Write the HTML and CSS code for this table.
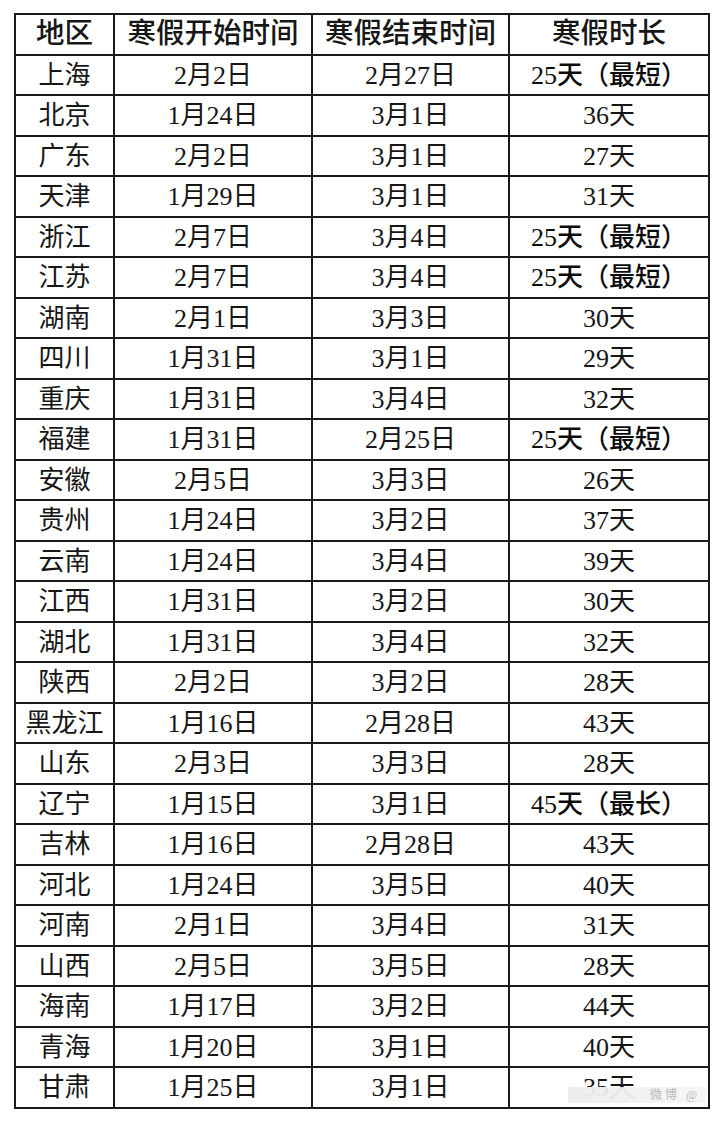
FILE: index.html
```html
<!DOCTYPE html>
<html lang="zh-CN">
<head>
<meta charset="utf-8">
<title>寒假时间</title>
<link rel="stylesheet" href="styles.css">
</head>
<body>
<div class="page">
<table class="holiday">
<colgroup><col class="c1"><col class="c2"><col class="c3"><col class="c4"></colgroup>
<thead>
<tr><th>地区</th><th>寒假开始时间</th><th>寒假结束时间</th><th>寒假时长</th></tr>
</thead>
<tbody>
<tr><td>上海</td><td>2月2日</td><td>2月27日</td><td class="hl">25天（最短）</td></tr>
<tr><td>北京</td><td>1月24日</td><td>3月1日</td><td>36天</td></tr>
<tr><td>广东</td><td>2月2日</td><td>3月1日</td><td>27天</td></tr>
<tr><td>天津</td><td>1月29日</td><td>3月1日</td><td>31天</td></tr>
<tr><td>浙江</td><td>2月7日</td><td>3月4日</td><td class="hl">25天（最短）</td></tr>
<tr><td>江苏</td><td>2月7日</td><td>3月4日</td><td class="hl">25天（最短）</td></tr>
<tr><td>湖南</td><td>2月1日</td><td>3月3日</td><td>30天</td></tr>
<tr><td>四川</td><td>1月31日</td><td>3月1日</td><td>29天</td></tr>
<tr><td>重庆</td><td>1月31日</td><td>3月4日</td><td>32天</td></tr>
<tr><td>福建</td><td>1月31日</td><td>2月25日</td><td class="hl">25天（最短）</td></tr>
<tr><td>安徽</td><td>2月5日</td><td>3月3日</td><td>26天</td></tr>
<tr><td>贵州</td><td>1月24日</td><td>3月2日</td><td>37天</td></tr>
<tr><td>云南</td><td>1月24日</td><td>3月4日</td><td>39天</td></tr>
<tr><td>江西</td><td>1月31日</td><td>3月2日</td><td>30天</td></tr>
<tr><td>湖北</td><td>1月31日</td><td>3月4日</td><td>32天</td></tr>
<tr><td>陕西</td><td>2月2日</td><td>3月2日</td><td>28天</td></tr>
<tr><td>黑龙江</td><td>1月16日</td><td>2月28日</td><td>43天</td></tr>
<tr><td>山东</td><td>2月3日</td><td>3月3日</td><td>28天</td></tr>
<tr><td>辽宁</td><td>1月15日</td><td>3月1日</td><td class="hl">45天（最长）</td></tr>
<tr><td>吉林</td><td>1月16日</td><td>2月28日</td><td>43天</td></tr>
<tr><td>河北</td><td>1月24日</td><td>3月5日</td><td>40天</td></tr>
<tr><td>河南</td><td>2月1日</td><td>3月4日</td><td>31天</td></tr>
<tr><td>山西</td><td>2月5日</td><td>3月5日</td><td>28天</td></tr>
<tr><td>海南</td><td>1月17日</td><td>3月2日</td><td>44天</td></tr>
<tr><td>青海</td><td>1月20日</td><td>3月1日</td><td>40天</td></tr>
<tr><td>甘肃</td><td>1月25日</td><td>3月1日</td><td class="last">35天<span class="mark">微博 @</span></td></tr>
</tbody>
</table>
</div>
</body>
</html>
```
FILE: styles.css
```css
html, body {
  margin: 0;
  padding: 0;
  background: #ffffff;
}
.page {
  padding: 13px 0 0 14px;
}
.holiday {
  border-collapse: collapse;
  table-layout: fixed;
  width: 694px;
  font-family: "Liberation Serif", "Noto Sans CJK SC", serif;
  color: #161616;
}
.c1 { width: 99px; }
.c2 { width: 198px; }
.c3 { width: 197px; }
.c4 { width: 200px; }
.holiday th,
.holiday td {
  border: 2px solid #1a1a1a;
  height: 38.5px;
  padding: 0;
  text-align: center;
  vertical-align: middle;
  line-height: 1;
}
.holiday th {
  font-size: 28.5px;
  font-weight: 500;
}
.holiday td {
  font-size: 26px;
  font-weight: 400;
  height: 36.5px;
  padding-top: 2px;
}
.holiday td.hl {
  font-weight: 500;
  color: #0c0c0c;
}
.holiday td.last {
  position: relative;
}
.mark {
  position: absolute;
  left: 58px;
  right: 2px;
  top: 19px;
  height: 16px;
  background: linear-gradient(90deg, rgba(236,236,236,0.95), rgba(246,246,246,0.95));
  color: #b8b8b8;
  font-size: 12px;
  line-height: 16px;
  text-align: right;
  padding-right: 6px;
  letter-spacing: 3px;
}
```
